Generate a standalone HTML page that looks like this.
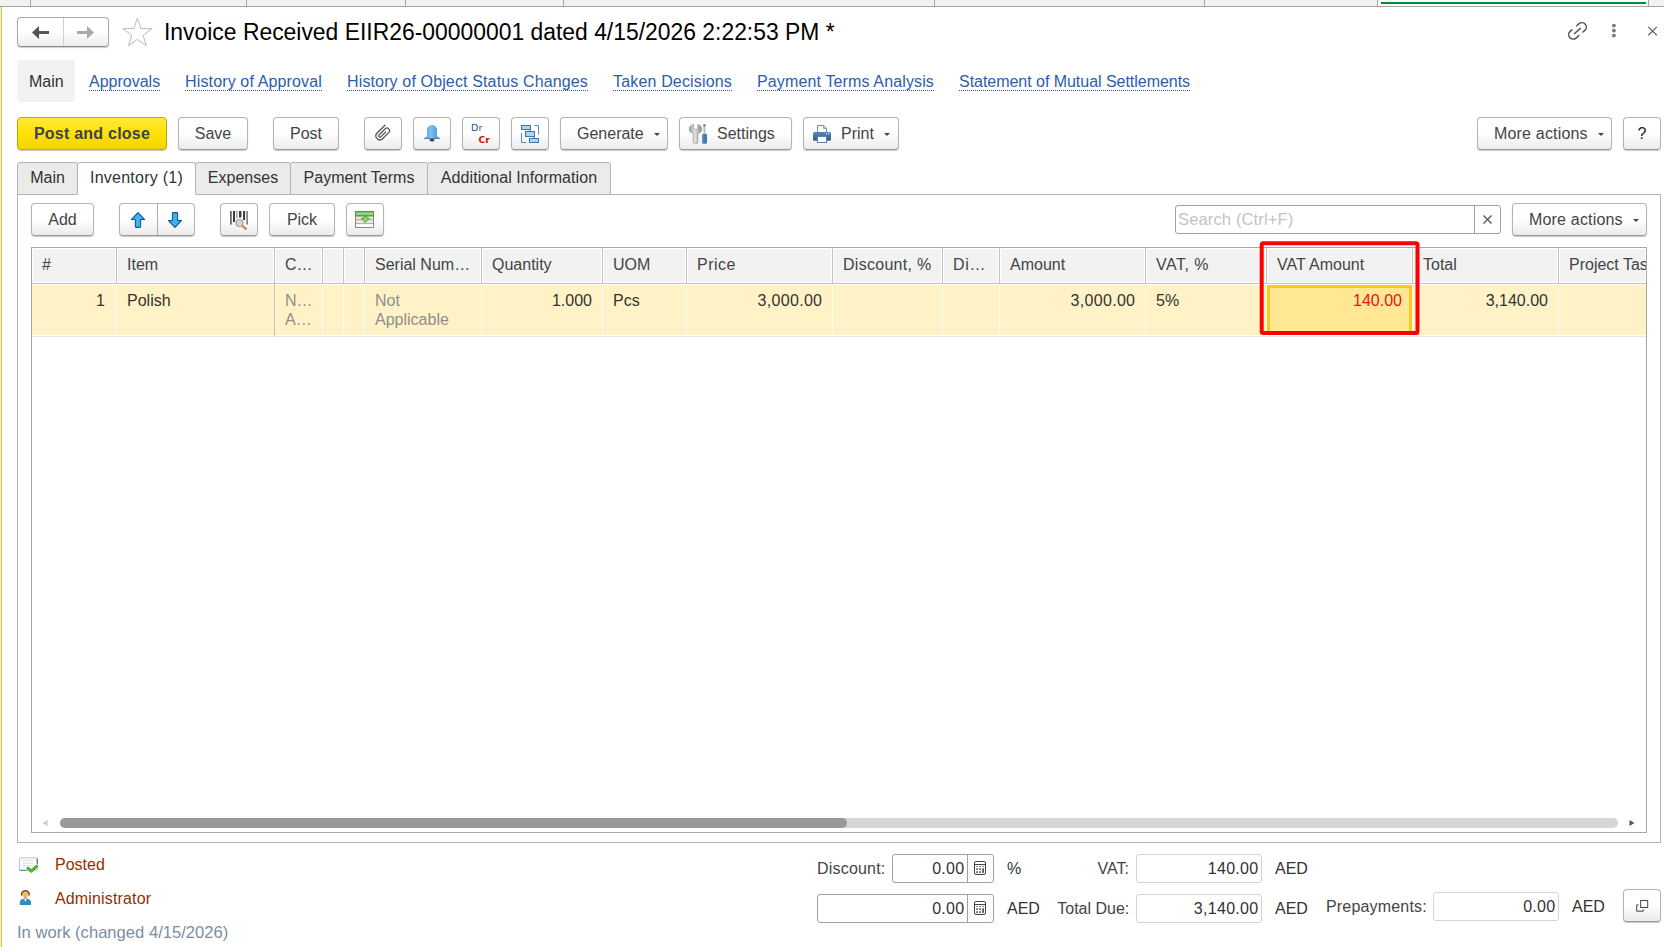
<!DOCTYPE html>
<html lang="en">
<head>
<meta charset="utf-8">
<title>Invoice Received EIIR26-00000001</title>
<style>
*{box-sizing:border-box;margin:0;padding:0}
html,body{width:1664px;height:947px;overflow:hidden;background:#fff}
body{position:relative;font-family:"Liberation Sans",Arial,sans-serif;font-size:16px;color:#333;line-height:18px}
.abs{position:absolute}
.t{position:absolute;white-space:nowrap;line-height:18px}
/* top strip */
#strip{left:0;top:0;width:1664px;height:6px;background:#f2f2f2}
#stripline{left:0;top:6px;width:1664px;height:1px;background:#a3a3a3}
.vs{position:absolute;top:0;width:1px;height:6px;background:#a3a3a3}
#leftbar{left:0;top:7px;width:2px;height:940px;background:linear-gradient(90deg,#fdec99 0,#fdec99 50%,#d0c280 50%,#d0c280 100%)}
/* buttons */
.btn{position:absolute;height:33px;padding-top:1px;border:1px solid #b4b4b4;border-bottom-color:#9a9a9a;border-radius:4px;
 background:linear-gradient(#fff 0,#fff 48%,#ebebeb 100%);box-shadow:0 1px 1px rgba(0,0,0,.22);
 font-size:16px;color:#444;text-align:center;line-height:30px;white-space:nowrap}
.btn.y{background:linear-gradient(#ffe940 0,#ffe100 50%,#f4d400 100%);border-color:#c7a900;color:#3c4150;font-weight:bold;letter-spacing:.23px}
.caret{display:inline-block;width:0;height:0;border-left:3px solid transparent;border-right:3px solid transparent;border-top:3px solid #444;vertical-align:middle;margin-left:10px;position:relative;top:0px}
a.l{position:absolute;margin-top:1px;color:#2a5db0;text-decoration:none;border-bottom:1px dotted #2a5db0;line-height:16px;white-space:nowrap}
/* tabs */
.tab{position:absolute;top:162px;height:33px;background:#ebebeb;border:1px solid #b4b4b4;border-radius:3px 3px 0 0;text-align:center;line-height:29px;color:#333}
.tab.act{background:#fff;border-bottom-color:#fff;height:33px}
/* table */
.hs{position:absolute;top:248px;width:3px;height:35px;background:linear-gradient(90deg,#fff 0,#fff 33.3%,#c3c3c3 33.3%,#c3c3c3 66.6%,#fff 66.6%)}
.rs{position:absolute;top:285px;width:1px;height:50px;background:#fffbee}
.h{position:absolute;top:256px;white-space:nowrap;color:#444;line-height:18px}
.c{position:absolute;top:291px;white-space:nowrap;color:#333;line-height:19px}
.r{text-align:right}
.inp{position:absolute;height:29px;border:1px solid #a0a0a0;border-radius:3px;background:#fff}
.inp.ro{border-color:#d4d4d4}
</style>
</head>
<body>
<!-- top strip -->
<div class="abs" id="strip"></div>
<div class="abs" id="stripline"></div>
<div class="vs" style="left:30px"></div>
<div class="vs" style="left:246px"></div>
<div class="vs" style="left:405px"></div>
<div class="vs" style="left:563px"></div>
<div class="vs" style="left:934px"></div>
<div class="vs" style="left:1204px"></div>
<div class="abs" style="left:1378px;top:0;width:270px;height:6px;background:#fff"></div>
<div class="vs" style="left:1377px"></div>
<div class="vs" style="left:1648px"></div>
<div class="abs" style="left:1381px;top:2px;width:265px;height:2px;background:#008d33"></div>
<div class="abs" id="leftbar"></div>

<!-- SECTION:TITLE -->
<div class="abs" style="left:17px;top:17px;width:92px;height:30px;border:1px solid #a8a8a8;border-bottom-color:#8f8f8f;border-radius:4px;background:linear-gradient(#fff 0,#fff 45%,#ededed 100%);box-shadow:0 1px 1px rgba(0,0,0,.2)"></div>
<div class="abs" style="left:63px;top:18px;width:1px;height:28px;background:#d0d0d0"></div>
<svg class="abs" style="left:17px;top:17px" width="92" height="30" viewBox="0 0 92 30">
 <path d="M15 15.5 L22 9 V14 H32 V17 H22 V22 Z" fill="#555"/>
 <path d="M77 15.5 L70 9 V14 H60 V17 H70 V22 Z" fill="#aaa"/>
</svg>
<svg class="abs" style="left:122px;top:17px" width="32" height="30" viewBox="0 0 32 30">
 <path d="M15.4 1.2 L18.9 11.5 L29.9 11.7 L21.1 18.3 L24.3 28.7 L15.4 22.4 L6.5 28.7 L9.7 18.3 L0.9 11.7 L11.9 11.5 Z" fill="#fff" stroke="#a9b3be" stroke-width="0.9" stroke-linejoin="miter"/>
</svg>
<div class="t" style="left:164px;top:18px;font-size:22.9px;line-height:28px;color:#000;transform:scaleY(1.08);transform-origin:0 22px">Invoice Received EIIR26-00000001 dated 4/15/2026 2:22:53 PM *</div>
<!-- SECTION:NAV -->
<div class="abs" style="left:17px;top:60px;width:58px;height:42px;background:#f2f2f2;border-radius:4px"></div>
<div class="t" style="left:29px;top:73px;color:#333">Main</div>
<a class="l" style="left:89px;top:73px">Approvals</a>
<a class="l" style="left:185px;top:73px;letter-spacing:.143px">History of Approval</a>
<a class="l" style="left:347px;top:73px;letter-spacing:.139px">History of Object Status Changes</a>
<a class="l" style="left:613px;top:73px;letter-spacing:.167px">Taken Decisions</a>
<a class="l" style="left:757px;top:73px;letter-spacing:.136px">Payment Terms Analysis</a>
<a class="l" style="left:959px;top:73px;letter-spacing:-.035px">Statement of Mutual Settlements</a>
<!-- SECTION:TOOLBAR -->
<div class="btn y" style="left:17px;top:117px;width:150px">Post and close</div>
<div class="btn" style="left:178px;top:117px;width:70px">Save</div>
<div class="btn" style="left:273px;top:117px;width:66px">Post</div>
<div class="btn" style="left:364px;top:117px;width:38px"></div>
<div class="btn" style="left:413px;top:117px;width:38px"></div>
<div class="btn" style="left:462px;top:117px;width:38px"></div>
<div class="btn" style="left:511px;top:117px;width:38px"></div>
<div class="btn" style="left:560px;top:117px;width:108px;text-align:left;padding-left:16px">Generate<span class="caret"></span></div>
<div class="btn" style="left:679px;top:117px;width:113px;text-align:left;padding-left:37px">Settings</div>
<div class="btn" style="left:803px;top:117px;width:96px;text-align:left;padding-left:37px">Print<span class="caret"></span></div>
<div class="btn" style="left:1477px;top:117px;width:135px;text-align:left;padding-left:16px;letter-spacing:.18px">More actions<span class="caret"></span></div>
<div class="btn" style="left:1623px;top:117px;width:38px;color:#222">?</div>
<!-- SECTION:TABS -->
<div class="abs" style="left:17px;top:194px;width:1644px;height:649px;border:1px solid #b4b4b4"></div>
<div class="tab" style="left:17px;width:61px">Main</div>
<div class="tab" style="left:195px;width:96px">Expenses</div>
<div class="tab" style="left:290px;width:138px">Payment Terms</div>
<div class="tab" style="left:427px;width:184px;letter-spacing:.07px">Additional Information</div>
<div class="tab act" style="left:77px;width:119px;letter-spacing:.25px">Inventory (1)</div>
<div class="btn" style="left:31px;top:203px;width:63px">Add</div>
<div class="btn" style="left:119px;top:203px;width:76px"></div>
<div class="abs" style="left:157px;top:204px;width:1px;height:31px;background:#adadad"></div>
<div class="btn" style="left:220px;top:203px;width:38px"></div>
<div class="btn" style="left:269px;top:203px;width:66px">Pick</div>
<div class="btn" style="left:346px;top:203px;width:38px"></div>
<div class="inp" style="left:1175px;top:205px;width:326px;height:29px"></div>
<div class="abs" style="left:1474px;top:206px;width:1px;height:27px;background:#a0a0a0"></div>
<div class="t" style="left:1178px;top:211px;color:#c4c4c4;font-size:16.600px;letter-spacing:.1px">Search (Ctrl+F)</div>
<svg class="abs" style="left:1481px;top:213px" width="13" height="13" viewBox="0 0 13 13"><path d="M2.5 2.5 L10.5 10.5 M10.5 2.5 L2.5 10.5" stroke="#555" stroke-width="1.3" fill="none"/></svg>
<div class="btn" style="left:1512px;top:203px;width:135px;text-align:left;padding-left:16px;letter-spacing:.18px">More actions<span class="caret"></span></div>
<!-- SECTION:TABLE -->
<div class="abs" style="left:31px;top:247px;width:1616px;height:586px;border:1px solid #a6a6a6;background:#fff"></div>
<div class="abs" style="left:32px;top:248px;width:1614px;height:35px;background:#f2f2f2;border:1px solid #fff"></div>
<div class="abs" style="left:32px;top:283px;width:1614px;height:1px;background:#c3c3c3"></div>
<div class="abs" style="left:32px;top:285px;width:1614px;height:50px;background:#fff2c6"></div>
<div class="abs" style="left:32px;top:336px;width:1614px;height:1px;background:#e9e9e9"></div>
<div class="hs" style="left:115px"></div><div class="hs" style="left:273px"></div><div class="hs" style="left:321px"></div><div class="hs" style="left:342px"></div><div class="hs" style="left:363px"></div><div class="hs" style="left:480px"></div><div class="hs" style="left:601px"></div><div class="hs" style="left:685px"></div><div class="hs" style="left:831px"></div><div class="hs" style="left:941px"></div><div class="hs" style="left:998px"></div><div class="hs" style="left:1144px"></div><div class="hs" style="left:1265px"></div><div class="hs" style="left:1411px"></div><div class="hs" style="left:1557px"></div>
<div class="rs" style="left:116px"></div><div class="rs" style="left:322px"></div><div class="rs" style="left:343px"></div><div class="rs" style="left:364px"></div><div class="rs" style="left:481px"></div><div class="rs" style="left:602px"></div><div class="rs" style="left:686px"></div><div class="rs" style="left:832px"></div><div class="rs" style="left:942px"></div><div class="rs" style="left:999px"></div><div class="rs" style="left:1145px"></div><div class="rs" style="left:1266px"></div><div class="rs" style="left:1412px"></div><div class="rs" style="left:1558px"></div>
<div class="abs" style="left:274px;top:284px;width:1px;height:53px;background:#c3c3c3"></div>
<div class="h" style="left:42px">#</div>
<div class="h" style="left:127px">Item</div>
<div class="h" style="left:285px">C…</div>
<div class="h" style="left:375px">Serial Num…</div>
<div class="h" style="left:492px">Quantity</div>
<div class="h" style="left:613px">UOM</div>
<div class="h" style="left:697px;letter-spacing:.5px">Price</div>
<div class="h" style="left:843px;letter-spacing:.28px">Discount, %</div>
<div class="h" style="left:953px;letter-spacing:.7px">Di…</div>
<div class="h" style="left:1010px">Amount</div>
<div class="h" style="left:1156px;letter-spacing:.5px">VAT, %</div>
<div class="h" style="left:1277px">VAT Amount</div>
<div class="h" style="left:1423px">Total</div>
<div class="h" style="left:1569px;width:77px;overflow:hidden">Project Task</div>
<div class="c r" style="left:32px;width:73px">1</div>
<div class="c" style="left:127px">Polish</div>
<div class="c" style="left:285px;color:#8e8e8e">N…<br>A…</div>
<div class="c" style="left:375px;color:#8e8e8e">Not<br>Applicable</div>
<div class="c r" style="left:482px;width:110px">1.000</div>
<div class="c" style="left:613px">Pcs</div>
<div class="c r" style="left:687px;width:135.300px;letter-spacing:.3px">3,000.00</div>
<div class="c r" style="left:1000px;width:135.300px;letter-spacing:.3px">3,000.00</div>
<div class="c" style="left:1156px">5%</div>
<div class="abs" style="left:1267px;top:285px;width:145px;height:50px;background:#ffe793;border:3px solid #fcc81e"></div>
<div class="c r" style="left:1267px;width:135px;color:#e8141a">140.00</div>
<div class="c r" style="left:1413px;width:135px">3,140.00</div>
<svg class="abs" style="left:1250px;top:235px" width="180" height="110" viewBox="1250 235 180 110"><rect x="1261.700" y="243.200" width="155.800" height="89.800" rx="1.500" fill="none" stroke="#fe0000" stroke-width="4"/></svg>
<div class="abs" style="left:60px;top:818px;width:1558px;height:10px;border-radius:5px;background:#d6d6d6"></div>
<div class="abs" style="left:60px;top:818px;width:787px;height:10px;border-radius:5px;background:#999"></div>
<svg class="abs" style="left:40px;top:818px" width="10" height="10" viewBox="0 0 10 10"><path d="M7.500 2 L2.500 5 L7.500 8 Z" fill="#ccc"/></svg>
<svg class="abs" style="left:1627px;top:818px" width="10" height="10" viewBox="0 0 10 10"><path d="M2.500 2 L7.500 5 L2.500 8 Z" fill="#555"/></svg>
<!-- SECTION:FOOTER -->
<div class="t" style="left:55px;top:856px;color:#982e00">Posted</div>
<div class="t" style="left:55px;top:890px;color:#982e00;letter-spacing:.15px">Administrator</div>
<div class="t" style="left:17px;top:924px;color:#7b8da3;font-size:16.6px">In work (changed 4/15/2026)</div>
<div class="t" style="left:817px;top:860px;color:#444;letter-spacing:.2px">Discount:</div>
<div class="inp" style="left:892px;top:854px;width:102px"></div>
<div class="abs" style="left:967px;top:855px;width:1px;height:27px;background:#a0a0a0"></div>
<div class="t r" style="left:893px;top:860px;width:72px;color:#333;letter-spacing:.3px;padding-right:.5px">0.00</div>
<div class="t" style="left:1007px;top:860px;color:#333">%</div>
<div class="t r" style="left:1050px;top:860px;width:79px;color:#444">VAT:</div>
<div class="inp ro" style="left:1136px;top:854px;width:126px"></div>
<div class="t r" style="left:1137px;top:860px;width:122px;color:#333;letter-spacing:.3px;padding-right:.5px">140.00</div>
<div class="t" style="left:1275px;top:860px;color:#333">AED</div>
<div class="inp" style="left:817px;top:894px;width:177px"></div>
<div class="abs" style="left:967px;top:895px;width:1px;height:27px;background:#a0a0a0"></div>
<div class="t r" style="left:818px;top:900px;width:147px;color:#333;letter-spacing:.3px;padding-right:.5px">0.00</div>
<div class="t" style="left:1007px;top:900px;color:#333">AED</div>
<div class="t r" style="left:1040px;top:900px;width:89.300px;color:#444">Total Due:</div>
<div class="inp ro" style="left:1136px;top:894px;width:126px"></div>
<div class="t r" style="left:1137px;top:900px;width:122px;color:#333;letter-spacing:.3px;padding-right:.5px">3,140.00</div>
<div class="t" style="left:1275px;top:900px;color:#333">AED</div>
<div class="t" style="left:1326px;top:898px;color:#444;letter-spacing:.18px">Prepayments:</div>
<div class="inp ro" style="left:1433px;top:892px;width:126px;height:29px"></div>
<div class="t r" style="left:1434px;top:898px;width:122px;color:#333;letter-spacing:.3px;padding-right:.5px">0.00</div>
<div class="t" style="left:1572px;top:898px;color:#333">AED</div>
<div class="btn" style="left:1623px;top:889px;width:38px"></div>
<!-- ICONS -->
<svg class="abs" style="left:0;top:0;pointer-events:none" width="1664" height="947" viewBox="0 0 1664 947">
<defs>
<linearGradient id="gbell" x1="0" x2="1" y1="0" y2="0"><stop offset="0" stop-color="#4f9fda"/><stop offset=".4" stop-color="#7cc3f3"/><stop offset="1" stop-color="#3f8fd0"/></linearGradient>
<linearGradient id="gwr" x1="0" x2="1" y1="0" y2="0"><stop offset="0" stop-color="#9a9a9a"/><stop offset=".45" stop-color="#e4e4e4"/><stop offset="1" stop-color="#8a8a8a"/></linearGradient>
<linearGradient id="gsd" x1="0" x2="1" y1="0" y2="0"><stop offset="0" stop-color="#5d93cf"/><stop offset="1" stop-color="#33689f"/></linearGradient>
<linearGradient id="gpr" x1="0" x2="0" y1="0" y2="1"><stop offset="0" stop-color="#5a86b4"/><stop offset="1" stop-color="#335c8c"/></linearGradient>
<linearGradient id="ggr" x1="0" x2="0" y1="0" y2="1"><stop offset="0" stop-color="#5aa83a"/><stop offset=".5" stop-color="#a6e08c"/><stop offset="1" stop-color="#5aa83a"/></linearGradient>
</defs>
<!-- link / more / close -->
<path d="M1571.83 29.88 L1570.16 31.32 A4.45 4.45 0 0 0 1575.97 38.06 L1578.81 35.62 M1576.68 25.71 L1579.03 23.69 A4.45 4.45 0 0 1 1584.84 30.43 L1582.98 32.03 M1574.61 33.49 L1580.38 28.40" fill="none" stroke="#555" stroke-width="1.5" stroke-linecap="round"/>
<circle cx="1613.9" cy="25.600" r="1.9" fill="#777"/><circle cx="1613.9" cy="30.600" r="1.9" fill="#777"/><circle cx="1613.9" cy="35.600" r="1.9" fill="#777"/>
<path d="M1648.3 26.9 L1656.8 35.2 M1656.8 26.9 L1648.3 35.2" stroke="#666" stroke-width="1.3" fill="none"/>
<!-- paperclip -->
<path d="M384.95 125.23 L376.50 133.69 A4.13 4.13 0 0 0 382.33 139.52 L389.14 132.71 A2.70 2.70 0 0 0 385.33 128.90 L378.67 135.56 A1.35 1.35 0 0 0 380.57 137.47 L385.70 132.34" fill="none" stroke="#555" stroke-width="1.3" stroke-linecap="round" transform="translate(384.95 125.23) scale(.95) translate(-384.95 -125.23)"/>
<!-- bell -->
<path d="M429.600 139 a2.400 2.600 0 0 0 4.800 0 Z" fill="#444"/>
<path d="M427 135.500 V130 a5 5 0 0 1 10 0 V135.500 q0 1.800 2.600 2.300 V139 H424.400 V137.800 q2.600 -0.500 2.600 -2.300 Z" fill="url(#gbell)"/>
<path d="M424.400 138.300 H439.600 V139 H424.400 Z" fill="#3a78a8"/>
<!-- structure -->
<g fill="#b7d1e6" stroke="#3f79a8" stroke-width="1">
<rect x="521.500" y="125.500" width="9" height="4"/><rect x="525.500" y="131.500" width="9" height="5"/><rect x="529.500" y="138.500" width="9" height="4"/>
</g>
<path d="M530 130 v1.500 M534 137 v1.500" stroke="#3f79a8" stroke-width="1" fill="none"/>
<path d="M534.500 125.500 H538.500 V134.500 M521.500 133 V142.500 H526" stroke="#5a8cb6" stroke-width="1" fill="none"/>
<!-- wrench -->
<path d="M693.500 124.300 V129.200 H697.800 V124.300 Q701.800 125.600 701.800 129.300 Q701.800 132.300 697.900 133.800 V142.300 Q697.900 143.700 695.600 143.700 Q693.200 143.700 693.200 142.300 V133.800 Q689.200 132.300 689.200 129.300 Q689.200 125.600 693.500 124.300 Z" fill="url(#gwr)" stroke="#8e8e8e" stroke-width=".6"/>
<!-- screwdriver -->
<rect x="703.400" y="124.400" width="2.100" height="10" fill="#bdbdbd"/><rect x="703.400" y="124.400" width="2.100" height="1.800" fill="#666"/>
<rect x="702" y="134" width="4.900" height="9.700" rx="1" fill="url(#gsd)"/>
<!-- printer -->
<path d="M817.500 132.500 V125.500 H823.500 L826.500 128.500 V132.500" fill="#fff" stroke="#6b8db3" stroke-width="1"/>
<path d="M823.500 125.500 V128.500 H826.500" fill="none" stroke="#6b8db3" stroke-width=".8"/>
<rect x="813" y="132" width="18" height="8.700" rx="1.500" fill="url(#gpr)"/>
<rect x="817.500" y="136.500" width="9" height="6" fill="#fff" stroke="#5a7fa8" stroke-width="1"/>
<rect x="826" y="133.200" width="1" height="1" fill="#fff"/><rect x="828" y="133.200" width="1" height="1" fill="#fff"/>
<!-- up/down arrows -->
<path d="M138 212.600 L144.500 219.500 H140.600 V226.600 Q140.600 227.400 139.800 227.400 H136.200 Q135.400 227.400 135.400 226.600 V219.500 H131.500 Z" fill="#45aef0" stroke="#0b5a94" stroke-width="1.1" stroke-linejoin="round"/>
<path d="M175 227.400 L181.500 220.500 H177.600 V213.400 Q177.600 212.600 176.800 212.600 H173.200 Q172.400 212.600 172.400 213.400 V220.500 H168.500 Z" fill="#45aef0" stroke="#0b5a94" stroke-width="1.1" stroke-linejoin="round"/>
<!-- barcode -->
<rect x="230" y="211" width="1.800" height="13.600" fill="#6a6a6a"/><rect x="233" y="211" width="2" height="11" fill="#3a3a3a"/><rect x="236.400" y="211" width="1" height="7.500" fill="#777"/>
<rect x="239" y="211" width="2.400" height="6.500" fill="#3a3a3a"/><rect x="243.100" y="211" width="2" height="9" fill="#3a3a3a"/><rect x="246.400" y="211" width="1.400" height="13.600" fill="#6a6a6a"/>
<path d="M242.300 225.800 L245.900 228.900" stroke="#c08a58" stroke-width="2.200" stroke-linecap="round"/>
<circle cx="239.500" cy="223" r="3.500" fill="#c3d8f7" stroke="#c9996c" stroke-width="1.200"/>
<!-- green table icon -->
<rect x="355.500" y="216" width="18" height="11.500" fill="#fff" stroke="#8b8b82" stroke-width="1"/>
<rect x="356" y="216" width="17" height="7.600" fill="#e9e9e5"/><path d="M356 219.700 H373 M356 223.600 H373" stroke="#a8a8a0" stroke-width="1"/>
<rect x="355.500" y="211.500" width="18" height="4.500" fill="url(#ggr)" stroke="#4f9c2f" stroke-width="1"/>
<path d="M364 216 V218.300 H361.300 L365.300 222.700 L369.300 218.300 H366.600 V216 Z" fill="#8fd472" stroke="#4f9c2f" stroke-width=".9"/>
<!-- posted icon -->
<rect x="19.500" y="857.900" width="17.800" height="12.400" rx="1" fill="#fff" stroke="#b4c2d4" stroke-width="1"/>
<path d="M37.300 858.500 V864" stroke="#6a6a6a" stroke-width="1.200"/>
<path d="M19.500 870.300 H26.500" stroke="#4a8a8c" stroke-width="1"/>
<path d="M22.500 860.600 H33.500 M22.500 863.100 H33.500 M22.500 865.600 H31" stroke="#d3deeb" stroke-width="1"/>
<path d="M28 868.300 L31.300 871.300 L36.400 866.500" fill="none" stroke="#2f8f14" stroke-width="2.900" stroke-linecap="round" stroke-linejoin="round"/>
<path d="M28 868.300 L31.300 871.300 L36.400 866.500" fill="none" stroke="#58c232" stroke-width="1.600" stroke-linecap="round" stroke-linejoin="round"/>
<!-- admin icon -->
<path d="M19.800 905 V902.500 Q19.800 899.500 23.500 898.800 H27.200 Q31 899.500 31 902.500 V905 Z" fill="#2f8dc2"/>
<path d="M24 898.700 L25.400 901.800 L26.800 898.700 Z" fill="#fff"/>
<rect x="24" y="896" width="2.800" height="3" fill="#e8a850"/>
<circle cx="25.400" cy="894" r="3.300" fill="#f2b962"/>
<path d="M21.600 895.500 A3.900 3.900 0 1 1 29.200 895.500" fill="none" stroke="#4d3116" stroke-width="1.200"/>
<!-- calculators -->
<g><rect x="974.500" y="861.500" width="11" height="13" rx="1.500" fill="#fff" stroke="#444" stroke-width="1"/>
<path d="M974.500 864.500 H985.500" stroke="#444" stroke-width="1"/>
<path d="M976.300 866.500 h1.500 M979.300 866.500 h1.500 M982.300 866.500 h1.500" stroke="#444" stroke-width=".8"/>
<rect x="976.300" y="868.300" width="1.600" height="1.600" fill="#444"/><rect x="979.300" y="868.300" width="1.600" height="1.600" fill="#444"/>
<rect x="976.300" y="871.300" width="1.600" height="1.600" fill="#444"/><rect x="979.300" y="871.300" width="1.600" height="1.600" fill="#444"/>
<rect x="982.300" y="868.300" width="1.600" height="4.600" fill="#444"/></g>
<g transform="translate(0 40)"><rect x="974.500" y="861.500" width="11" height="13" rx="1.500" fill="#fff" stroke="#444" stroke-width="1"/>
<path d="M974.500 864.500 H985.500" stroke="#444" stroke-width="1"/>
<path d="M976.300 866.500 h1.500 M979.300 866.500 h1.500 M982.300 866.500 h1.500" stroke="#444" stroke-width=".8"/>
<rect x="976.300" y="868.300" width="1.600" height="1.600" fill="#444"/><rect x="979.300" y="868.300" width="1.600" height="1.600" fill="#444"/>
<rect x="976.300" y="871.300" width="1.600" height="1.600" fill="#444"/><rect x="979.300" y="871.300" width="1.600" height="1.600" fill="#444"/>
<rect x="982.300" y="868.300" width="1.600" height="4.600" fill="#444"/></g>
<!-- bottom-right button icon -->
<rect x="1640.700" y="900.500" width="7" height="7" fill="none" stroke="#444" stroke-width="1"/>
<path d="M1638.600 904.900 H1636.700 V911.200 H1643.200 V909.300" fill="none" stroke="#444" stroke-width="1"/>
</svg>
<div class="t" style="left:471px;top:121px;font-family:'DejaVu Sans',sans-serif;font-size:9.500px;line-height:14px;color:#1d568b;letter-spacing:.1px">Dr</div>
<div class="t" style="left:478.600px;top:133px;font-family:'DejaVu Sans',sans-serif;font-size:9.200px;line-height:14px;color:#c81400;font-weight:bold;letter-spacing:-.1px">Cr</div>
</body>
</html>
